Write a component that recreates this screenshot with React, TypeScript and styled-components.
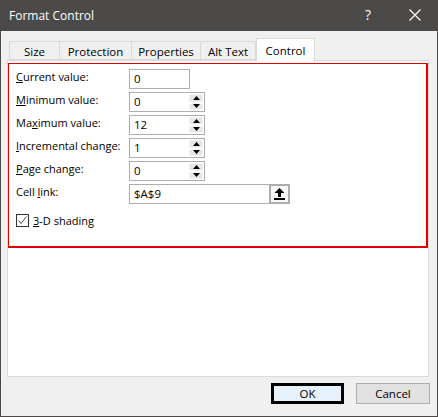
import React from 'react'
import styled, { createGlobalStyle } from 'styled-components'

// G L O B A L
const GlobalStyle = createGlobalStyle`
  html, body {
    margin: 0;
    padding: 0;
    background: #f0f0f0;
  }
  * {
    box-sizing: border-box;
  }
`

const FONT = `"Segoe UI", "Open Sans", "Noto Sans", sans-serif`

// T Y P E S
interface FieldRow {
  label: string
  key: number
  value: string
  spin?: boolean
  refEdit?: boolean
}

const tabs = [
  { name: 'Size', width: 51 },
  { name: 'Protection', width: 72 },
  { name: 'Properties', width: 69 },
  { name: 'Alt Text', width: 55 },
  { name: 'Control', width: 59 }
]

const rows: FieldRow[] = [
  { label: 'Current value:', key: 0, value: '0' },
  { label: 'Minimum value:', key: 0, value: '0', spin: true },
  { label: 'Maximum value:', key: 2, value: '12', spin: true },
  { label: 'Incremental change:', key: 0, value: '1', spin: true },
  { label: 'Page change:', key: 0, value: '0', spin: true },
  { label: 'Cell link:', key: 5, value: '$A$9', refEdit: true }
]

// H E L P E R S
const Accel: React.FC<{ text: string; at: number }> = ({ text, at }) => (
  <span>
    {text.slice(0, at)}
    <u>{text.charAt(at)}</u>
    {text.slice(at + 1)}
  </span>
)

const SpinUp = () => (
  <svg width='7' height='4' viewBox='0 0 7 4'>
    <path d='M3.5 0 L7 4 L0 4 Z' fill='#000' />
  </svg>
)

const SpinDown = () => (
  <svg width='7' height='4' viewBox='0 0 7 4'>
    <path d='M0 0 L7 0 L3.5 4 Z' fill='#000' />
  </svg>
)

const CollapseIcon = () => (
  <svg width='11' height='12' viewBox='0 0 11 12'>
    <path d='M5.5 0 L10.5 5 L7 5 L7 9 L4 9 L4 5 L0.5 5 Z' fill='#000' />
    <rect x='0' y='10' width='11' height='2' fill='#000' />
  </svg>
)

// C O M P O N E N T
export default function App () {
  return (
    <>
      <GlobalStyle />
      <Window>
        <TitleBar>
          <Title>Format Control</Title>
          <Help>?</Help>
          <Close>
            <svg width='12' height='12' viewBox='0 0 12 12'>
              <path d='M0.5 0.5 L11.5 11.5 M11.5 0.5 L0.5 11.5' stroke='#fff' strokeWidth='1.2' />
            </svg>
          </Close>
        </TitleBar>
        <Body>
          <TabStrip>
            {tabs.map(t => (
              <Tab key={t.name} $width={t.width} $active={t.name === 'Control'}>{t.name}</Tab>
            ))}
          </TabStrip>
          <Panel>
            <Highlight>
              <FieldGrid>
                {rows.map(r => (
                  <React.Fragment key={r.label}>
                    <Label><Accel text={r.label} at={r.key} /></Label>
                    {r.refEdit
                      ? (
                        <RefEdit>
                          <InputBox $width={141}>{r.value}</InputBox>
                          <RefButton><CollapseIcon /></RefButton>
                        </RefEdit>
                        )
                      : (
                        <InputBox $width={r.spin ? 76 : 61}>
                          {r.value}
                          {r.spin && (
                            <Spin>
                              <SpinButton><SpinUp /></SpinButton>
                              <SpinButton><SpinDown /></SpinButton>
                            </Spin>
                          )}
                        </InputBox>
                        )}
                  </React.Fragment>
                ))}
              </FieldGrid>
              <CheckRow>
                <CheckBox>
                  <svg width='11' height='11' viewBox='0 0 11 11'>
                    <path d='M1.5 5.5 L4 8.5 L9.5 1.5' stroke='#444' strokeWidth='1' fill='none' />
                  </svg>
                </CheckBox>
                <Accel text='3-D shading' at={0} />
              </CheckRow>
            </Highlight>
          </Panel>
          <ButtonRow>
            <DialogButton $default>OK</DialogButton>
            <DialogButton>Cancel</DialogButton>
          </ButtonRow>
        </Body>
      </Window>
    </>
  )
}

// S T Y L E S
const Window = styled.div`
  width: 438px;
  height: 417px;
  border: 1px solid #4b4a48;
  border-top: none;
  background: #f0f0f0;
  display: flex;
  flex-direction: column;
  font-family: ${FONT};
  font-size: 11px;
  color: #000;
`

const TitleBar = styled.div`
  height: 31px;
  flex: none;
  background: #4b4a48;
  color: #fff;
  display: flex;
  align-items: center;
  padding-left: 8px;
`

const Title = styled.div`
  flex: 1;
  font-size: 12px;
  padding-bottom: 1px;
`

const Help = styled.div`
  width: 10px;
  margin-right: 36px;
  font-size: 14px;
  text-align: center;
  padding-bottom: 2px;
`

const Close = styled.div`
  width: 12px;
  height: 12px;
  margin-right: 16px;
  display: flex;
  margin-bottom: 2px;
`

const Body = styled.div`
  flex: 1;
  display: flex;
  flex-direction: column;
  padding: 7px 8px 0 6px;
`

const TabStrip = styled.div`
  display: flex;
  align-items: flex-end;
  height: 22px;
  padding-left: 2px;
  position: relative;
  z-index: 1;
`

const Tab = styled.div<{ $active?: boolean; $width: number }>`
  width: ${p => p.$width}px;
  height: ${p => (p.$active ? '23px' : '19px')};
  margin-bottom: ${p => (p.$active ? '-1px' : '0')};
  border: 1px solid #d9d9d9;
  border-bottom: ${p => (p.$active ? 'none' : '1px solid #d9d9d9')};
  border-left: ${p => (p.$active ? '1px solid #d9d9d9' : 'none')};
  background: ${p => (p.$active ? '#fff' : '#f0f0f0')};
  display: flex;
  align-items: center;
  justify-content: center;
  font-size: 11.5px;
  padding-top: ${p => (p.$active ? '0' : '1px')};
  &:first-child {
    border-left: 1px solid #d9d9d9;
  }
`

const Panel = styled.div`
  flex: 1;
  background: #fff;
  border: 1px solid #d9d9d9;
  padding-top: 2px;
`

const Highlight = styled.div`
  height: 185px;
  border: 2px solid #e50000;
  border-left-width: 1px;
  border-top-width: 1px;
  padding: 5px 6px 0 7px;
`

const FieldGrid = styled.div`
  display: grid;
  grid-template-columns: 113px auto;
  grid-auto-rows: 20px;
  row-gap: 3px;
`

const Label = styled.div`
  line-height: 16px;
  white-space: nowrap;
`

const InputBox = styled.div<{ $width: number }>`
  width: ${p => p.$width}px;
  height: 20px;
  border: 1px solid #adadad;
  background: #fff;
  padding: 0 4px;
  display: flex;
  align-items: center;
  position: relative;
  line-height: 18px;
  font-size: 11.5px;
`

const Spin = styled.div`
  position: absolute;
  top: 1px;
  right: 1px;
  bottom: 1px;
  width: 14px;
  display: flex;
  flex-direction: column;
  gap: 1px;
`

const SpinButton = styled.div`
  flex: 1;
  background: #e6e6e6;
  border: 1px solid #f4f4f4;
  display: flex;
  align-items: center;
  justify-content: center;
`

const RefEdit = styled.div`
  display: flex;
`

const RefButton = styled.div`
  width: 21px;
  height: 20px;
  margin-left: -1px;
  border: 2px solid #adadad;
  background: #f7f7f7;
  display: flex;
  align-items: center;
  justify-content: center;
`

const CheckRow = styled.div`
  display: flex;
  align-items: center;
  gap: 4px;
  margin-top: 9px;
  line-height: 15px;
`

const CheckBox = styled.div`
  width: 13px;
  height: 13px;
  border: 1px solid #333;
  background: #fff;
  display: flex;
  align-items: center;
  justify-content: center;
`

const ButtonRow = styled.div`
  flex: none;
  height: 39px;
  display: flex;
  justify-content: flex-end;
  gap: 12px;
  padding: 6px 0 0;
  margin-right: -1px;
  font-size: 11.5px;
`

const DialogButton = styled.div<{ $default?: boolean }>`
  width: ${p => (p.$default ? '73px' : '74px')};
  height: 21px;
  border: ${p => (p.$default ? '3px solid #000' : '1px solid #adadad')};
  background: ${p => (p.$default ? '#e5f1fb' : '#e1e1e1')};
  display: flex;
  align-items: center;
  justify-content: center;
`
